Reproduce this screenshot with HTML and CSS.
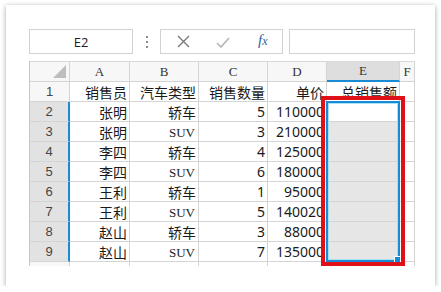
FILE: index.html
```html
<!DOCTYPE html>
<html lang="zh-CN">
<head>
  <meta charset="UTF-8">
  <title>总销售额</title>
  <link rel="stylesheet" href="styles.css">
</head>
<body>
  <div class="card">
    <div class="toolbar">
      <div class="namebox">E2</div>
      <div class="grip">
        <svg width="4" height="12" viewBox="0 0 4 12"><rect x="1" y="0" width="2" height="2" fill="#8a8a8a"/><rect x="1" y="5" width="2" height="2" fill="#8a8a8a"/><rect x="1" y="10" width="2" height="2" fill="#8a8a8a"/></svg>
      </div>
      <div class="buttons">
        <svg class="btn-x" width="13" height="13" viewBox="0 0 13 13"><path d="M1 1L12 12M12 1L1 12" stroke="#7a7a7a" stroke-width="1.4" fill="none"/></svg>
        <svg class="btn-ok" width="14" height="11" viewBox="0 0 14 11"><path d="M1 6L5 10L13 1" stroke="#b4b4b4" stroke-width="1.6" fill="none"/></svg>
        <span class="fx">f<span class="fx-x">x</span></span>
      </div>
      <div class="formula"></div>
    </div>

    <div class="sheet-wrap">
      <div class="sheet">
        <!-- column headers -->
        <div class="ch corner"><span class="tri"></span></div>
        <div class="ch">A</div>
        <div class="ch">B</div>
        <div class="ch">C</div>
        <div class="ch">D</div>
        <div class="ch ch-sel">E</div>
        <div class="ch">F</div>

        <div class="rh">1</div>
        <div class="c">销售员</div>
        <div class="c">汽车类型</div>
        <div class="c">销售数量</div>
        <div class="c">单价</div>
        <div class="c">总销售额</div>
        <div class="c"></div>

        <div class="rh rh-sel">2</div>
        <div class="c">张明</div>
        <div class="c">轿车</div>
        <div class="c">5</div>
        <div class="c">110000</div>
        <div class="c"></div>
        <div class="c"></div>

        <div class="rh rh-sel">3</div>
        <div class="c">张明</div>
        <div class="c latin">SUV</div>
        <div class="c">3</div>
        <div class="c">210000</div>
        <div class="c sel"></div>
        <div class="c"></div>

        <div class="rh rh-sel">4</div>
        <div class="c">李四</div>
        <div class="c">轿车</div>
        <div class="c">4</div>
        <div class="c">125000</div>
        <div class="c sel"></div>
        <div class="c"></div>

        <div class="rh rh-sel">5</div>
        <div class="c">李四</div>
        <div class="c latin">SUV</div>
        <div class="c">6</div>
        <div class="c">180000</div>
        <div class="c sel"></div>
        <div class="c"></div>

        <div class="rh rh-sel">6</div>
        <div class="c">王利</div>
        <div class="c">轿车</div>
        <div class="c">1</div>
        <div class="c">95000</div>
        <div class="c sel"></div>
        <div class="c"></div>

        <div class="rh rh-sel">7</div>
        <div class="c">王利</div>
        <div class="c latin">SUV</div>
        <div class="c">5</div>
        <div class="c">140020</div>
        <div class="c sel"></div>
        <div class="c"></div>

        <div class="rh rh-sel">8</div>
        <div class="c">赵山</div>
        <div class="c">轿车</div>
        <div class="c">3</div>
        <div class="c">88000</div>
        <div class="c sel"></div>
        <div class="c"></div>

        <div class="rh rh-sel">9</div>
        <div class="c">赵山</div>
        <div class="c latin">SUV</div>
        <div class="c">7</div>
        <div class="c">135000</div>
        <div class="c sel"></div>
        <div class="c"></div>

        <div class="rh"></div>
        <div class="c"></div>
        <div class="c"></div>
        <div class="c"></div>
        <div class="c"></div>
        <div class="c"></div>
        <div class="c"></div>
      </div>

      <!-- selection E2:E9 and the red mark over it -->
      <div class="selection"><span class="handle"></span></div>
      <div class="mark"></div>
    </div>
  </div>
</body>
</html>
```

FILE: styles.css
```css
body { margin: 0; background: #fff; font-family: "Noto Sans", "Noto Sans CJK SC", sans-serif; }

.card { margin: 5px 0 0 6px; width: 429px; height: 281px; box-sizing: border-box; padding: 24px 20px 0 23px; background: #fff; box-shadow: 0 1px 5px rgba(0,0,0,0.35); }

.toolbar { display: flex; height: 25px; }
.namebox { width: 104px; box-sizing: border-box; border: 1px solid #d2d2d2; display: flex; align-items: center; justify-content: center; font-family: "Open Sans", sans-serif; font-size: 13px; color: #222; }
.grip { width: 27px; display: flex; align-items: center; justify-content: center; }
.buttons { width: 123px; box-sizing: border-box; border: 1px solid #d2d2d2; position: relative; }
.btn-x { position: absolute; left: 16px; top: 5px; }
.btn-ok { position: absolute; left: 55px; top: 7px; }
.fx { position: absolute; left: 97px; top: 2px; font-family: "Liberation Serif", serif; font-style: italic; font-size: 15px; color: #2f5fa8; }
.fx-x { font-size: 12px; }
.formula { flex: 1; margin-left: 6px; box-sizing: border-box; border: 1px solid #d2d2d2; }

.sheet-wrap { position: relative; margin-top: 7px; }
.sheet { display: grid; grid-template-columns: 40px 60px 69px 69px 59px 73px 15px; grid-auto-rows: 20px; height: 204px; overflow: hidden; border-left: 1px solid #c8c8c8; border-top: 1px solid #d8d8d8; }
.sheet > div { box-sizing: border-box; border-right: 1px solid #d4d4d4; border-bottom: 1px solid #d4d4d4; display: flex; align-items: center; overflow: hidden; white-space: nowrap; }

.ch { justify-content: center; background: #f7f7f7; font-family: "Liberation Serif", serif; font-size: 13px; color: #333; }
.ch-sel { background: #dedede; border-bottom: 2px solid #1a8ad4 !important; }
.corner { position: relative; }
.tri { position: absolute; right: 3px; bottom: 3px; width: 0; height: 0; border-left: 13px solid transparent; border-bottom: 13px solid #bdbdbd; }

.rh { justify-content: center; background: #f7f7f7; font-family: "Liberation Sans", sans-serif; font-size: 13px; color: #444; }
.rh-sel { background: #e2e2e2; border-right: 2px solid #1a8ad4 !important; }

.c { justify-content: flex-end; padding: 0 2px 0 0; font-size: 14px; color: #1a1a1a; }
.latin { font-family: "Liberation Serif", serif; font-size: 13px; padding: 3px 3px 0 0; }
.sel { background: #e6e6e6; }

.selection { position: absolute; left: 297px; top: 40px; width: 74px; height: 161px; box-sizing: border-box; border: 2px solid #1a8ad4; box-shadow: inset 0 0 0 1px #a6e2f6; }
.handle { position: absolute; right: -3px; bottom: -3px; width: 5px; height: 5px; background: #1a8ad4; border: 1px solid #fff; }
.mark { position: absolute; left: 292px; top: 35px; width: 84px; height: 170px; box-sizing: border-box; border: 4px solid #e01018; }
```
